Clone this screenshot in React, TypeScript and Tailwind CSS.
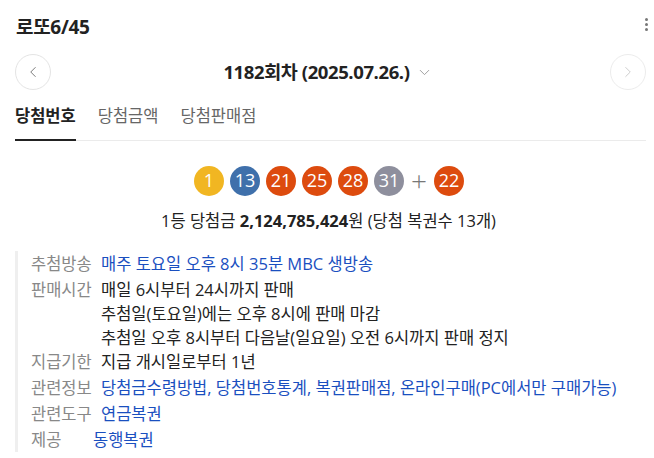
import { ChevronLeft, ChevronRight, ChevronDown } from 'lucide-react';

const balls = [
  { n: 1, c: 'bg-[#f1b622]' },
  { n: 13, c: 'bg-[#3f70ab]' },
  { n: 21, c: 'bg-[#dd4b0e]' },
  { n: 25, c: 'bg-[#dd4b0e]' },
  { n: 28, c: 'bg-[#dd4b0e]' },
  { n: 31, c: 'bg-[#8e8f9d]' },
];

function Ball({ n, c }: { n: number; c: string }) {
  return (
    <span className={`w-[30px] h-[30px] rounded-full ${c} text-white text-[18px] flex items-center justify-center`}>
      {n}
    </span>
  );
}

export default function App() {
  return (
    <div className="w-[654px] h-[458px] bg-white overflow-hidden font-['Open_Sans','Noto_Sans_CJK_KR',sans-serif] text-[#222]">
      <div className="flex items-center justify-between pl-4 pr-[6px] pt-[12px] h-[42px]">
        <h1 className="text-[19px] font-bold tracking-[-0.3px]">로또6/45</h1>
        <div className="flex flex-col gap-[2px] -mt-[6px]">
          <span className="w-[3px] h-[3px] rounded-full bg-[#777]" />
          <span className="w-[3px] h-[3px] rounded-full bg-[#777]" />
          <span className="w-[3px] h-[3px] rounded-full bg-[#777]" />
        </div>
      </div>

      <div className="flex items-center justify-between pl-[15px] pr-[8px] mt-[12px]">
        <button className="w-9 h-9 rounded-full border border-[#e4e4e4] flex items-center justify-center text-[#777]">
          <ChevronLeft size={18} strokeWidth={1.3} />
        </button>
        <div className="flex items-center gap-[6px] pr-[5px]">
          <span className="text-[18.5px] font-bold tracking-[-0.4px]">1182회차 (2025.07.26.)</span>
          <ChevronDown size={17} strokeWidth={1.3} className="text-[#999]" />
        </div>
        <button className="w-9 h-9 rounded-full border border-[#ececec] flex items-center justify-center text-[#ccc]">
          <ChevronRight size={18} strokeWidth={1.3} />
        </button>
      </div>

      <div className="ml-[15px] mr-[8px] mt-[14px] flex gap-[22px] border-b border-[#ebebeb] text-[16.5px]">
        <span className="pb-[10px] border-b-2 border-[#222] -mb-px font-bold">당첨번호</span>
        <span className="pb-[10px] text-[#666]">당첨금액</span>
        <span className="pb-[10px] text-[#666]">당첨판매점</span>
      </div>

      <div className="flex items-center justify-center gap-[6px] mt-[25px] pl-[4px]">
        {balls.map((b) => (
          <Ball key={b.n} n={b.n} c={b.c} />
        ))}
        <span className="text-[#777] text-[28px] leading-none font-light px-[1px] -mt-[2px]">+</span>
        <Ball n={22} c="bg-[#dd4b0e]" />
      </div>

      <p className="text-center text-[16.5px] mt-[13px] pl-[3px]">
        1등 당첨금 <b className="font-bold">2,124,785,424</b>원 (당첨 복권수 13개)
      </p>

      <div className="ml-[15px] mt-[17px] border-l-[3px] border-[#efefef] pl-[13px] text-[16.5px] leading-[25px]">
        <div className="flex">
          <span className="w-[70px] text-[#888]">추첨방송</span>
          <span className="text-[#1a4fbf]">매주 토요일 오후 8시 35분 MBC 생방송</span>
        </div>
        <div className="flex mt-[1px]">
          <span className="w-[70px] text-[#888]">판매시간</span>
          <div>
            <p>매일 6시부터 24시까지 판매</p>
            <p className="-mt-[1px]">추첨일(토요일)에는 오후 8시에 판매 마감</p>
            <p className="-mt-[1px]">추첨일 오후 8시부터 다음날(일요일) 오전 6시까지 판매 정지</p>
          </div>
        </div>
        <div className="flex mt-[-1px]">
          <span className="w-[70px] text-[#888]">지급기한</span>
          <span>지급 개시일로부터 1년</span>
        </div>
        <div className="flex mt-[1px]">
          <span className="w-[70px] text-[#888]">관련정보</span>
          <span className="text-[#1a4fbf] whitespace-nowrap">
            당첨금수령방법, 당첨번호통계, 복권판매점, 온라인구매(PC에서만 구매가능)
          </span>
        </div>
        <div className="flex mt-[1px]">
          <span className="w-[70px] text-[#888]">관련도구</span>
          <span className="text-[#1a4fbf]">연금복권</span>
        </div>
        <div className="flex mt-[1px]">
          <span className="w-[62px] text-[#888]">제공</span>
          <span className="text-[#1a4fbf]">동행복권</span>
        </div>
      </div>
    </div>
  );
}
